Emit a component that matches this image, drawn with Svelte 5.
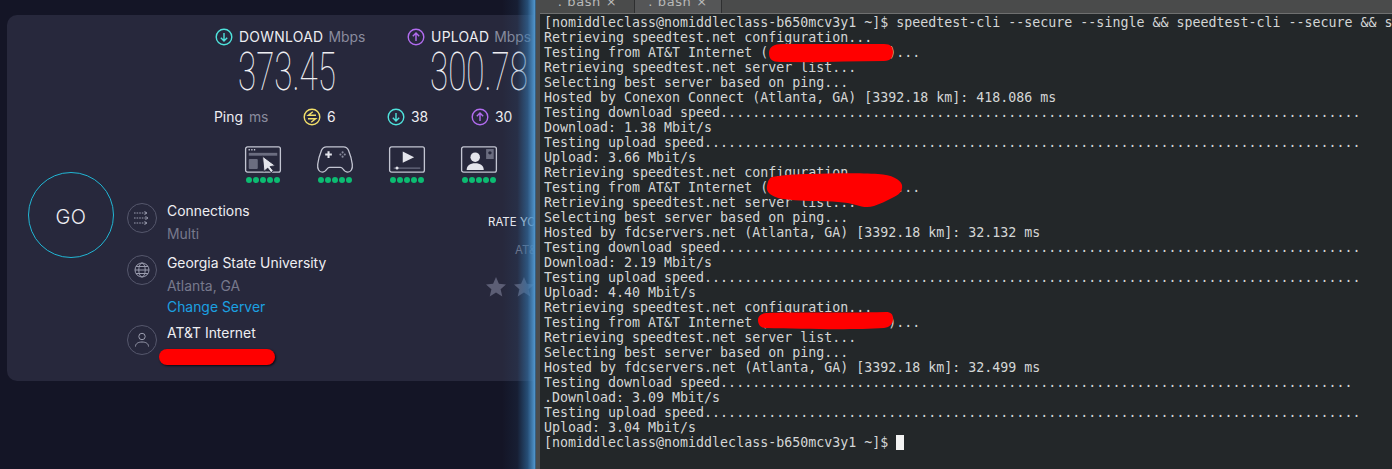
<script>
	const DL = '.'.repeat(80);
	const UL = '.'.repeat(82);
	const prompt = '[nomiddleclass@nomiddleclass-b650mcv3y1 ~]$';
	const lines = [
		prompt + ' speedtest-cli --secure --single && speedtest-cli --secure && speedtest-cli --secure',
		'Retrieving speedtest.net configuration...',
		'Testing from AT&T Internet (               )...',
		'Retrieving speedtest.net server list...',
		'Selecting best server based on ping...',
		'Hosted by Conexon Connect (Atlanta, GA) [3392.18 km]: 418.086 ms',
		'Testing download speed' + DL,
		'Download: 1.38 Mbit/s',
		'Testing upload speed' + UL,
		'Upload: 3.66 Mbit/s',
		'Retrieving speedtest.net configuration...',
		'Testing from AT&T Internet (               )...',
		'Retrieving speedtest.net server list...',
		'Selecting best server based on ping...',
		'Hosted by fdcservers.net (Atlanta, GA) [3392.18 km]: 32.132 ms',
		'Testing download speed' + DL,
		'Download: 2.19 Mbit/s',
		'Testing upload speed' + UL,
		'Upload: 4.40 Mbit/s',
		'Retrieving speedtest.net configuration...',
		'Testing from AT&T Internet (               )...',
		'Retrieving speedtest.net server list...',
		'Selecting best server based on ping...',
		'Hosted by fdcservers.net (Atlanta, GA) [3392.18 km]: 32.499 ms',
		'Testing download speed' + '.'.repeat(79),
		'.Download: 3.09 Mbit/s',
		'Testing upload speed' + UL,
		'Upload: 3.04 Mbit/s'
	];
	const dots = [0, 1, 2, 3, 4];
</script>

{#snippet arrow(color, up)}
	<svg class="arrow" width="18" height="18" viewBox="0 0 18 18" fill="none" stroke={color} stroke-width="1.4">
		<circle cx="9" cy="9" r="7.8" />
		{#if up}
			<path d="M9 13V5M5.8 8.2 9 5l3.2 3.2" />
		{:else}
			<path d="M9 5v8M5.8 9.8 9 13l3.2-3.2" />
		{/if}
	</svg>
{/snippet}

{#snippet quality()}
	<div class="dots">
		{#each dots as d (d)}<i></i>{/each}
	</div>
{/snippet}

<div class="screen">
	<section class="speedtest">
		<div class="card">
			<div class="top">
				<div class="speeds">
					<div class="speed">
						<div class="speed-label">{@render arrow('#4fe3dc', false)}<b>DOWNLOAD</b> <span>Mbps</span></div>
						<div class="number">373.45</div>
					</div>
					<div class="speed">
						<div class="speed-label">{@render arrow('#b26cf0', true)}<b>UPLOAD</b> <span>Mbps</span></div>
						<div class="number">300.78</div>
					</div>
				</div>
				<div class="ping">
					<div class="ping-name">Ping <span>ms</span></div>
					<div class="ping-val">
						<svg class="arrow" width="18" height="18" viewBox="0 0 18 18" fill="none" stroke="#f3e06a" stroke-width="1.4">
							<circle cx="9" cy="9" r="7.8" />
							<path d="M13 7.2H5.400L9.800 3.800M5 10.800h7.600L8.200 14.200" />
						</svg>
						6
					</div>
					<div class="ping-val">{@render arrow('#4fe3dc', false)}38</div>
					<div class="ping-val">{@render arrow('#b26cf0', true)}30</div>
				</div>
				<div class="apps">
					<div class="app">
						<svg width="38" height="29" viewBox="0 0 40 30" fill="none">
							<rect x="1.700" y="1.700" width="36.600" height="26.600" rx="2" stroke="#c3c5d2" stroke-width="1.400" />
							<path d="M4.800 4.800h1.400M7.600 4.800H9M10.400 4.800h1.400" stroke="#c3c5d2" stroke-width="1.600" />
							<rect x="5" y="8" width="30" height="3" fill="#6b6d80" />
							<rect x="5" y="14.500" width="9.500" height="10.500" rx="1" fill="#6b6d80" />
							<path d="M19.500 11.500 33 21.500l-5.500 1 3.500 4.600-2.600 1.800-3.400-4.800-4 3.400z" fill="#e4e5ec" stroke="#27283c" />
						</svg>
						{@render quality()}
					</div>
					<div class="app">
						<svg width="38" height="29" viewBox="0 0 40 30" fill="none">
							<path d="M11 1.700h18c2.400 0 4.200 1.200 5.200 3.600 1.800 4.400 3.400 9.600 4 14.700.6 5-1.600 8.300-4.800 8.300-2.200 0-3.600-1.200-5-3.300-.8-1.200-1.400-1.800-2.800-1.800H14.400c-1.400 0-2 .6-2.800 1.800-1.400 2.100-2.800 3.300-5 3.300-3.200 0-5.400-3.300-4.800-8.300.6-5.100 2.200-10.300 4-14.700 1-2.400 2.800-3.600 5.200-3.600z" stroke="#c3c5d2" stroke-width="1.400" />
							<path d="M9.700 9.800h7M13.200 6.300v7" stroke="#e4e5ec" stroke-width="2.200" />
							<circle cx="28" cy="7.500" r="1.100" fill="#8a8c9e" />
							<circle cx="28" cy="12" r="1.100" fill="#8a8c9e" />
							<circle cx="25.700" cy="9.800" r="1.100" fill="#8a8c9e" />
							<circle cx="30.300" cy="9.800" r="1.100" fill="#8a8c9e" />
						</svg>
						{@render quality()}
					</div>
					<div class="app">
						<svg width="38" height="29" viewBox="0 0 40 30" fill="none">
							<rect x="1.700" y="1.700" width="36.600" height="26.600" rx="2" stroke="#c3c5d2" stroke-width="1.400" />
							<path d="M15.500 6.500 27.500 12.500 15.500 18.500z" fill="#e4e5ec" />
							<path d="M6 24h28" stroke="#6b6d80" stroke-width="1.400" />
							<circle cx="9.500" cy="24" r="1.600" fill="#e4e5ec" />
						</svg>
						{@render quality()}
					</div>
					<div class="app">
						<svg width="38" height="29" viewBox="0 0 40 30" fill="none">
							<rect x="1.700" y="1.700" width="36.600" height="26.600" rx="2" stroke="#c3c5d2" stroke-width="1.400" />
							<rect x="27.500" y="4" width="8" height="10.500" fill="#6b6d80" />
							<circle cx="31.500" cy="8" r="1.800" fill="#27283c" />
							<circle cx="16" cy="12.500" r="5" fill="#e4e5ec" />
							<path d="M7 26c0-4.500 3.500-7 9-7s9 2.500 9 7z" fill="#e4e5ec" />
						</svg>
						{@render quality()}
					</div>
				</div>
			</div>

			<div class="bottom">
				<div class="go-col">
					<div class="go">GO</div>
				</div>
				<div class="details">
					<div class="detail">
						<div class="round">
							<svg width="18" height="18" viewBox="0 0 18 18" fill="none" stroke="#9a9cae" stroke-width="1">
								<path stroke-dasharray="1.600 1" d="M1 4h12M1 9h13M1 14h12" />
								<path d="M11.500 2.500 14 4l-2.500 1.500M12.500 7.500 15 9l-2.500 1.500M11.500 12.500 14 14l-2.500 1.500" />
							</svg>
						</div>
						<div class="detail-text">
							<div class="name">Connections</div>
							<div class="sub">Multi</div>
						</div>
					</div>
					<div class="detail server">
						<div class="round">
							<svg width="18" height="18" viewBox="0 0 18 18" fill="none" stroke="#9a9cae" stroke-width="1">
								<circle cx="9" cy="9" r="7" />
								<ellipse cx="9" cy="9" rx="3.200" ry="7" />
								<path d="M2 9h14M3 5.500h12M3 12.500h12" />
							</svg>
						</div>
						<div class="detail-text">
							<div class="name">Georgia State University</div>
							<div class="sub">Atlanta, GA</div>
							<div class="link">Change Server</div>
						</div>
					</div>
					<div class="detail">
						<div class="round">
							<svg width="18" height="18" viewBox="0 0 18 18" fill="none" stroke="#9a9cae" stroke-width="1">
								<circle cx="9" cy="5.500" r="3.200" />
								<path d="M2.500 15.500c0-3 2.800-4.500 6.500-4.500s6.500 1.500 6.500 4.500" />
							</svg>
						</div>
						<div class="detail-text">
							<div class="name">AT&amp;T Internet</div>
						</div>
					</div>
				</div>
				<div class="rate">
					<div class="rate-title">RATE YOUR PROVIDER</div>
					<div class="rate-isp">AT&amp;T</div>
					<div class="stars">
						{#each dots as d (d)}
							<svg width="22" height="22" viewBox="0 0 22 22"><path d="M11 1l2.900 6.800 7.100.6-5.400 4.800 1.700 7.300L11 16.600l-6.300 3.900 1.700-7.300L1 8.400l7.100-.6z" fill="#5c5e75" /></svg>
						{/each}
					</div>
				</div>
			</div>
		</div>
		<div class="glow"></div>
		<div class="mark-isp"></div>
	</section>

	<section class="terminal">
		<div class="tabs">
			<div class="tab">. bash ×</div>
			<div class="tab active">. bash ×</div>
		</div>
		<div class="output">
			{#each lines as line}
				<div class="line">{line}</div>
			{/each}
			<div class="line">{prompt} <span class="cursor"></span></div>
		</div>
		<svg class="scribbles" width="852" height="469" viewBox="540 0 852 469">
			<path fill="#ff0000" d="M772 44h112c7 0 9 3 9 8s-2 9-9 9l-40 .5-30 .7-34-.2c-8 0-11-3-11-9s5-9 13-9z" />
			<path fill="#ff0000" d="M772 177c12-2 20-3 40-3 20-1 50-1 66 0 14 1 22 5 24 11 1 6-3 10-10 13-6 3-12 6-18 8-6 2-12 1-18-1-10-3-24-4-42-4-12 0-28-1-36-3-9-3-12-7-11-12 1-5 2-8 5-9z" />
			<path fill="#ff0000" d="M768 313c20-1 70 0 118-1 5 0 7 2 7 7s-3 8-9 9c-30 2-80 1-118 0-6 0-8-4-8-8s3-7 10-7z" />
		</svg>
	</section>
</div>

<style>
	:global(body) {
		margin: 0;
		background: #141526;
	}

	.screen {
		display: flex;
		width: 1392px;
		height: 469px;
		overflow: hidden;
	}

	.speedtest {
		position: relative;
		width: 536px;
		flex: none;
		padding: 15px 0 0 7px;
		box-sizing: border-box;
		background: #141526;
		overflow: hidden;
		font-family: Inter, "Noto Sans", sans-serif;
		color: #eeeef2;
	}

	.card {
		width: 529px;
		height: 366px;
		box-sizing: border-box;
		border-radius: 10px 0 0 10px;
		background: #27283c;
		overflow: hidden;
	}

	.top {
		padding: 13px 0 0 207px;
		height: 159px;
		box-sizing: border-box;
	}

	.speeds {
		display: flex;
	}

	.speed {
		width: 192px;
		flex: none;
		white-space: nowrap;
	}

	.speed-label {
		display: flex;
		align-items: center;
		gap: 5px;
		padding-left: 1px;
		height: 18px;
		font-size: 13.900px;
	}

	.speed-label b {
		font-weight: 400;
		margin-left: 1px;
		letter-spacing: 0.3px;
	}

	.speed-label span {
		color: #8a8c9e;
	}

	.arrow {
		flex: none;
	}

	.number {
		margin: 3px 0 0 24px;
		font-family: Roboto, sans-serif;
		font-weight: 100;
		font-size: 53px;
		line-height: 46px;
		transform: scaleX(0.625);
		transform-origin: left center;
	}

	.ping {
		display: flex;
		align-items: center;
		margin-top: 13px;
		height: 18px;
		font-size: 13.900px;
	}

	.ping-name {
		width: 89px;
		flex: none;
	}

	.ping-name span {
		margin-left: 2px;
		color: #8a8c9e;
	}

	.ping-val {
		display: flex;
		align-items: center;
		gap: 6px;
		width: 84px;
		flex: none;
	}

	.apps {
		display: flex;
		gap: 34px;
		margin: 19px 0 0 30px;
	}

	.app {
		width: 38px;
		flex: none;
	}

	.app svg {
		display: block;
	}

	.dots {
		display: flex;
		justify-content: center;
		gap: 1.200px;
		margin-top: 3px;
	}

	.dots i {
		width: 6px;
		height: 6px;
		border-radius: 50%;
		background: #0cbc72;
	}

	.bottom {
		display: flex;
	}

	.go-col {
		width: 120px;
		flex: none;
		padding-left: 21px;
		box-sizing: border-box;
	}

	.go {
		width: 86px;
		height: 86px;
		margin-top: -2px;
		padding-top: 3px;
		box-sizing: border-box;
		border-radius: 50%;
		border: 1px solid #22b6d4;
		display: flex;
		align-items: center;
		justify-content: center;
		font-size: 20px;
		font-weight: 300;
		letter-spacing: 0.5px;
	}

	.details {
		padding-top: 29px;
		width: 361px;
		flex: none;
	}

	.detail {
		display: flex;
		gap: 10px;
		margin-bottom: 12px;
	}

	.detail.server {
		margin-bottom: 9px;
	}

	.round {
		width: 30px;
		height: 30px;
		flex: none;
		box-sizing: border-box;
		border: 1px solid #55576c;
		border-radius: 50%;
		display: flex;
		align-items: center;
		justify-content: center;
	}

	.detail-text {
		font-size: 13.900px;
		margin-top: -1px;
	}

	.name {
		line-height: 18px;
	}

	.sub {
		margin-top: 5px;
		line-height: 18px;
		color: #77798c;
	}

	.link {
		margin-top: 3px;
		line-height: 18px;
		color: #1ba1e2;
	}

	.rate {
		padding-top: 39px;
		flex: none;
		width: 150px;
		font-size: 11.500px;
		white-space: nowrap;
	}

	.rate-title {
		line-height: 18px;
	}

	.rate-isp {
		margin: 10px 0 0 27px;
		line-height: 18px;
		color: #77798c;
	}

	.stars {
		display: flex;
		gap: 6px;
		margin: 17px 0 0 -3px;
	}

	.glow {
		position: absolute;
		top: 0;
		right: 0;
		bottom: 0;
		width: 34px;
		background: linear-gradient(to right, rgba(45, 100, 150, 0) 0%, rgba(45, 100, 150, 0.12) 45%, rgba(50, 115, 170, 0.6) 75%, #4f93c9 96%, #2a4258 100%);
	}

	.mark-isp {
		position: absolute;
		left: 159px;
		top: 349px;
		width: 116px;
		height: 16px;
		border-radius: 8px;
		background: #ff0000;
		box-shadow: 1px 1px 2px #0b0b14;
	}

	.terminal {
		position: relative;
		flex: 1;
		min-width: 0;
		background: #232729;
		border-left: 4px solid #4b4c4d;
		overflow: hidden;
	}

	.tabs {
		display: flex;
		height: 13px;
		background: #4a4b4b;
		border-bottom: 1px solid #6f7070;
		overflow: hidden;
	}

	.tab {
		width: 94px;
		height: 13px;
		box-sizing: border-box;
		margin-left: 1px;
		border-right: 1px solid #2e2f30;
		font-family: "DejaVu Sans", sans-serif;
		font-size: 13px;
		letter-spacing: 0.6px;
		line-height: 4px;
		text-align: center;
		color: #b9b9b9;
	}

	.tab.active {
		width: 87px;
		margin-left: 0;
		background: #555657;
	}

	.output {
		padding: 1px 0 0 4px;
		font-family: "DejaVu Sans Mono", monospace;
		font-size: 13.300px;
		line-height: 15px;
		color: #d4d6d6;
	}

	.line {
		height: 15px;
		white-space: pre;
	}

	.cursor {
		display: inline-block;
		width: 8px;
		height: 15px;
		background: #f2f2f2;
		vertical-align: top;
	}

	.scribbles {
		position: absolute;
		left: 0;
		top: 0;
	}
</style>
